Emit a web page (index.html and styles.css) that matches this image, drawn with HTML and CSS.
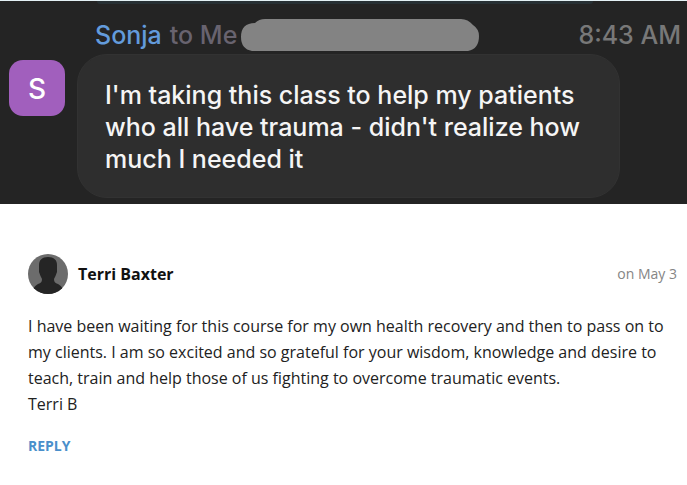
FILE: index.html
```html
<!doctype html>
<html lang="en">
<head>
  <meta charset="utf-8">
  <meta name="viewport" content="width=device-width,initial-scale=1">
  <title>Course feedback</title>
  <link rel="stylesheet" href="styles.css">
</head>
<body>
  <section class="chat">
    <div class="prev-bubble"></div>
    <header class="chat-head">
      <span class="from">Sonja</span>
      <span class="to">to Me</span>
      <svg class="redacted" viewBox="0 0 238 32" preserveAspectRatio="none" aria-hidden="true">
        <path d="M11 32Q0 30 0 18Q0 4 14 4Q18 0 24 0H220Q227 0 232 6Q238 10 238 17Q238 30 227 32Z" fill="#838383"/>
      </svg>
      <time class="time">8:43 AM</time>
    </header>
    <div class="chat-row">
      <div class="badge">S</div>
      <p class="bubble">I'm taking this class to help my patients who all have trauma - didn't realize how much I needed it</p>
    </div>
  </section>

  <article class="comment">
    <header class="comment-head">
      <svg class="avatar" viewBox="0 0 40 40" aria-hidden="true">
        <defs><clipPath id="round"><circle cx="20" cy="20" r="20"/></clipPath></defs>
        <g clip-path="url(#round)">
          <rect width="40" height="40" fill="#6c6c6c"/>
          <path d="M20 3C14 3 11 6 11 11V18C12 21 13 23 14 25C14 28 13 29 10 30C7 32 5 33 4 40H36C35 33 33 32 30 30C27 29 26 28 26 25C27 23 28 21 29 18V11C29 6 26 3 20 3Z" fill="#252525"/>
        </g>
      </svg>
      <h2 class="name">Terri Baxter</h2>
      <time class="date">on May 3</time>
    </header>
    <p class="text">I have been waiting for this course for my own health recovery and then to pass on to my clients. I am so excited and so grateful for your wisdom, knowledge and desire to teach, train and help those of us fighting to overcome traumatic events.<br>Terri B</p>
    <button class="reply" type="button">REPLY</button>
  </article>
</body>
</html>
```
FILE: styles.css
```css
:root{
  --chat:#242424;
  --bubble:#2e2e2e;
  --blue:#4a8fcb;
}
*{box-sizing:border-box}
body{margin:0;background:#fff;font-family:"Open Sans",sans-serif;color:#222}

/* chat message */
.chat{background:var(--chat);border-top:1px solid #e4f1f5;padding:0 6px 6px 9px;font-family:Inter,sans-serif}
.prev-bubble{height:3px;margin:0 88px;background:#273034;border-radius:0 0 20px 20px}
.chat-head{display:flex;align-items:center;height:50px;padding:12px 0 0 86px;font-size:25px;font-weight:500;line-height:32px;white-space:pre}
.from{color:#639bdc;margin-right:8px}
.to{color:#68636f}
.redacted{flex:0 1 238px;min-width:0;height:32px;margin-left:4px}
.time{margin-left:auto;color:#787878}
.chat-row{display:flex;align-items:flex-start;gap:12px}
.badge{flex:none;width:56px;height:56px;margin-top:6px;border-radius:14px;background:#a15fbd;color:#fff;font-size:28px;font-weight:500;line-height:58px;text-align:center}
.bubble{flex:0 1 543px;margin:0;padding:24px 27px 22px;border:1px solid #323232;border-radius:30px;background:var(--bubble);color:#f5f5f5;font-size:25px;font-weight:500;line-height:32px}

/* comment */
.comment{padding:50px 10px 24px 28px}
.comment-head{display:flex;align-items:center;gap:10px}
.avatar{flex:none;width:40px;height:40px}
.name{margin:0;color:#111;font-size:16px;font-weight:700;line-height:24px}
.date{margin-left:auto;color:#858585;font-size:14px;line-height:24px}
.text{margin:19px 0 17px;font-size:16px;line-height:26px}
.reply{display:block;padding:0;border:0;background:none;color:var(--blue);font:700 14px/24px "Open Sans",sans-serif;cursor:pointer}
```
